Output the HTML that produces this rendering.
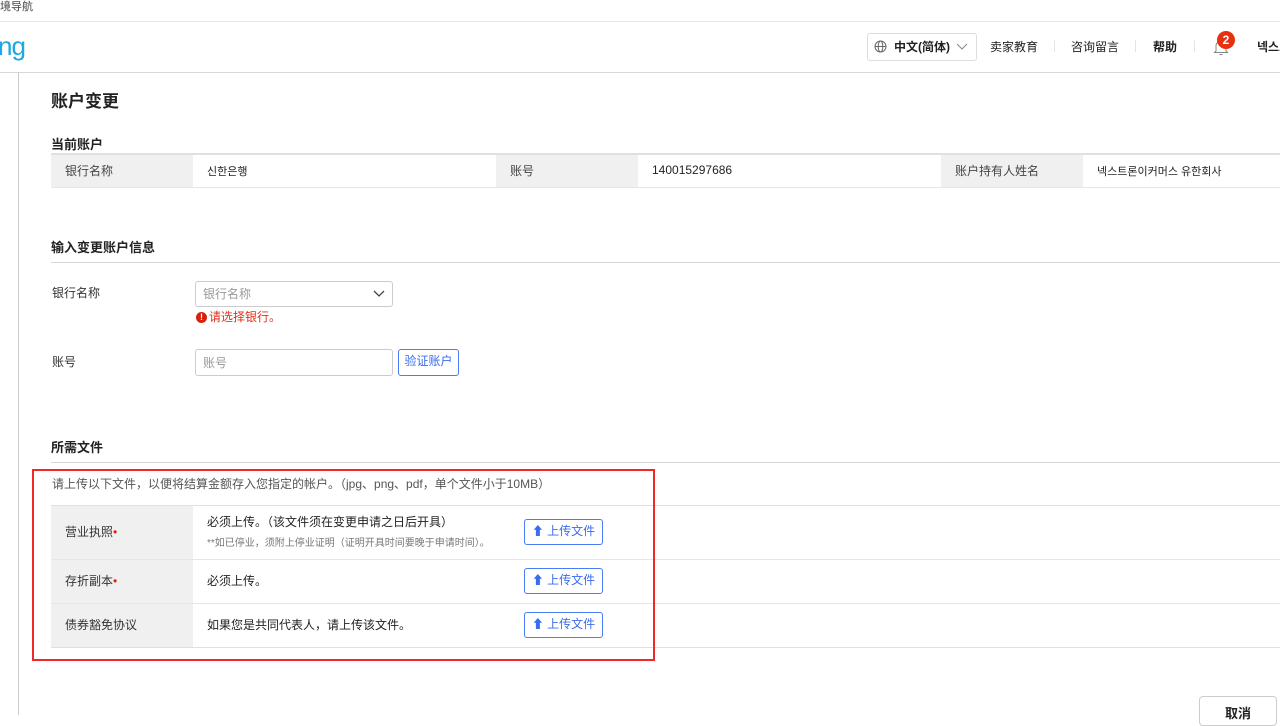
<!DOCTYPE html><html><head><meta charset="utf-8"><style>
*{box-sizing:border-box;margin:0;padding:0}
body{width:1280px;height:715px;overflow:hidden;background:#fff;font-family:"Liberation Sans","Noto Sans CJK SC",sans-serif;color:#222;position:relative;font-size:12px}
.a{position:absolute;white-space:nowrap}
.hl{position:absolute;height:1px;background:#ddd}
.lb{background:#f0f0f0}
.btn{position:absolute;border:1px solid #4a7cf5;border-radius:3px;color:#3a6cf0;font-size:12px;text-align:center;background:#fff}
</style></head><body>
<div class="a" style="left:0;top:-2px;font-size:11px;color:#444">境导航</div>
<div class="hl" style="left:0;top:21px;width:1280px;background:#e8e8e8"></div>
<div class="a" style="left:-2px;top:31px;font-size:26px;color:#1ea7e0;letter-spacing:-1px">ng</div>
<div class="a" style="left:867px;top:33px;width:110px;height:28px;border:1px solid #ddd;border-radius:3px"></div>
<svg class="a" style="left:874px;top:40px" width="13" height="13" viewBox="0 0 13 13" fill="none" stroke="#666"><circle cx="6.5" cy="6.5" r="5.5"/><ellipse cx="6.5" cy="6.5" rx="2.3" ry="5.5"/><path d="M1 6.5h11"/></svg>
<div class="a" style="left:894px;top:38px;font-weight:bold;font-size:12px">中文(简体)</div>
<svg class="a" style="left:956px;top:43px" width="12" height="8"><path d="M1 1l5 5 5-5" fill="none" stroke="#888"/></svg>
<div class="a" style="left:990px;top:38px">卖家教育</div>
<div class="a" style="left:1054px;top:40px;width:1px;height:12px;background:#e4e4e4"></div>
<div class="a" style="left:1071px;top:38px">咨询留言</div>
<div class="a" style="left:1135px;top:40px;width:1px;height:12px;background:#e4e4e4"></div>
<div class="a" style="left:1153px;top:38px;font-weight:bold">帮助</div>
<div class="a" style="left:1194px;top:40px;width:1px;height:12px;background:#e4e4e4"></div>
<svg class="a" style="left:1213px;top:39px" width="16" height="17" fill="none" stroke="#888"><path d="M3 12V7a5 5 0 0 1 10 0v5l1.5 1.5h-13z"/><path d="M6.5 15.5h3"/></svg>
<div class="a" style="left:1217px;top:31px;width:18px;height:18px;border-radius:50%;background:#e8300e;color:#fff;font-weight:bold;font-size:12px;text-align:center;line-height:18px">2</div>
<div class="a" style="left:1257px;top:38px;font-weight:bold">넥스트</div>
<div class="hl" style="left:0;top:72px;width:1280px;background:#d8d8d8"></div>
<div class="a" style="left:18px;top:72px;width:1px;height:643px;background:#ccc"></div>
<div class="a" style="left:51px;top:87px;font-size:17px;font-weight:bold">账户变更</div>
<div class="a" style="left:51px;top:134px;font-size:13px;font-weight:bold">当前账户</div>
<div class="a" style="left:51px;top:153px;width:1229px;height:35px;border-top:2px solid #e0e0e0;border-bottom:1px solid #e6e6e6"></div>
<div class="a lb" style="left:51px;top:155px;width:142px;height:32px"></div>
<div class="a lb" style="left:496px;top:155px;width:142px;height:32px"></div>
<div class="a lb" style="left:941px;top:155px;width:142px;height:32px"></div>
<div class="a" style="left:65px;top:162px;color:#444">银行名称</div>
<div class="a" style="left:207px;top:163px;font-size:11px">신한은행</div>
<div class="a" style="left:510px;top:162px;color:#444">账号</div>
<div class="a" style="left:652px;top:163px">140015297686</div>
<div class="a" style="left:955px;top:162px;color:#444">账户持有人姓名</div>
<div class="a" style="left:1097px;top:163px;font-size:11px">넥스트론이커머스 유한회사</div>
<div class="a" style="left:51px;top:237px;font-size:13px;font-weight:bold">输入变更账户信息</div>
<div class="hl" style="left:51px;top:262px;width:1229px;background:#d6d6d6"></div>
<div class="a" style="left:52px;top:284px;color:#333">银行名称</div>
<div class="a" style="left:195px;top:281px;width:198px;height:26px;border:1px solid #ccc;border-radius:3px;color:#999;padding:3px 7px">银行名称</div>
<svg class="a" style="left:373px;top:290px" width="12" height="8"><path d="M1 1l5 5 5-5" fill="none" stroke="#444" stroke-width="1.3"/></svg>
<div class="a" style="left:196px;top:312px;width:11px;height:11px;border-radius:50%;background:#d8200a;color:#fff;font-size:9px;font-weight:bold;text-align:center;line-height:11px">!</div>
<div class="a" style="left:209px;top:308px;color:#e0301a">请选择银行。</div>
<div class="a" style="left:52px;top:353px;color:#333">账号</div>
<div class="a" style="left:195px;top:349px;width:198px;height:27px;border:1px solid #ccc;border-radius:3px;color:#999;padding:4px 7px">账号</div>
<div class="btn" style="left:398px;top:349px;width:61px;height:27px;line-height:23px">验证账户</div>
<div class="a" style="left:51px;top:437px;font-size:13px;font-weight:bold">所需文件</div>
<div class="hl" style="left:51px;top:462px;width:1229px;background:#d6d6d6"></div>
<div class="a" style="left:52px;top:475px;color:#555">请上传以下文件，以便将结算金额存入您指定的帐户。（jpg、png、pdf，单个文件小于10MB）</div>
<div class="hl" style="left:51px;top:505px;width:1229px;background:#e0e0e0"></div>
<div class="a lb" style="left:51px;top:506px;width:142px;height:141px"></div>
<div class="hl" style="left:51px;top:559px;width:1229px;background:#e6e6e6"></div>
<div class="hl" style="left:51px;top:603px;width:1229px;background:#e6e6e6"></div>
<div class="hl" style="left:51px;top:647px;width:1229px;background:#e0e0e0"></div>
<div class="a" style="left:65px;top:523px;color:#333">营业执照<span style="color:#e0200a">•</span></div>
<div class="a" style="left:65px;top:572px;color:#333">存折副本<span style="color:#e0200a">•</span></div>
<div class="a" style="left:65px;top:616px;color:#333">债券豁免协议</div>
<div class="a" style="left:207px;top:513px">必须上传。（该文件须在变更申请之日后开具）</div>
<div class="a" style="left:207px;top:534px;font-size:10px;color:#777">**如已停业，须附上停业证明（证明开具时间要晚于申请时间）。</div>
<div class="a" style="left:207px;top:572px">必须上传。</div>
<div class="a" style="left:207px;top:616px">如果您是共同代表人，请上传该文件。</div>
<div class="btn" style="left:524px;top:519px;width:79px;height:26px;line-height:22px">⬆ 上传文件</div>
<div class="btn" style="left:524px;top:568px;width:79px;height:26px;line-height:22px">⬆ 上传文件</div>
<div class="btn" style="left:524px;top:612px;width:79px;height:26px;line-height:22px">⬆ 上传文件</div>
<div class="a" style="left:32px;top:469px;width:623px;height:192px;border:2px solid #f0282a"></div>
<div class="a" style="left:1199px;top:696px;width:78px;height:30px;border:1px solid #ccc;border-radius:4px;text-align:center;font-size:13px;font-weight:bold;padding-top:6px">取消</div>
</body></html>
